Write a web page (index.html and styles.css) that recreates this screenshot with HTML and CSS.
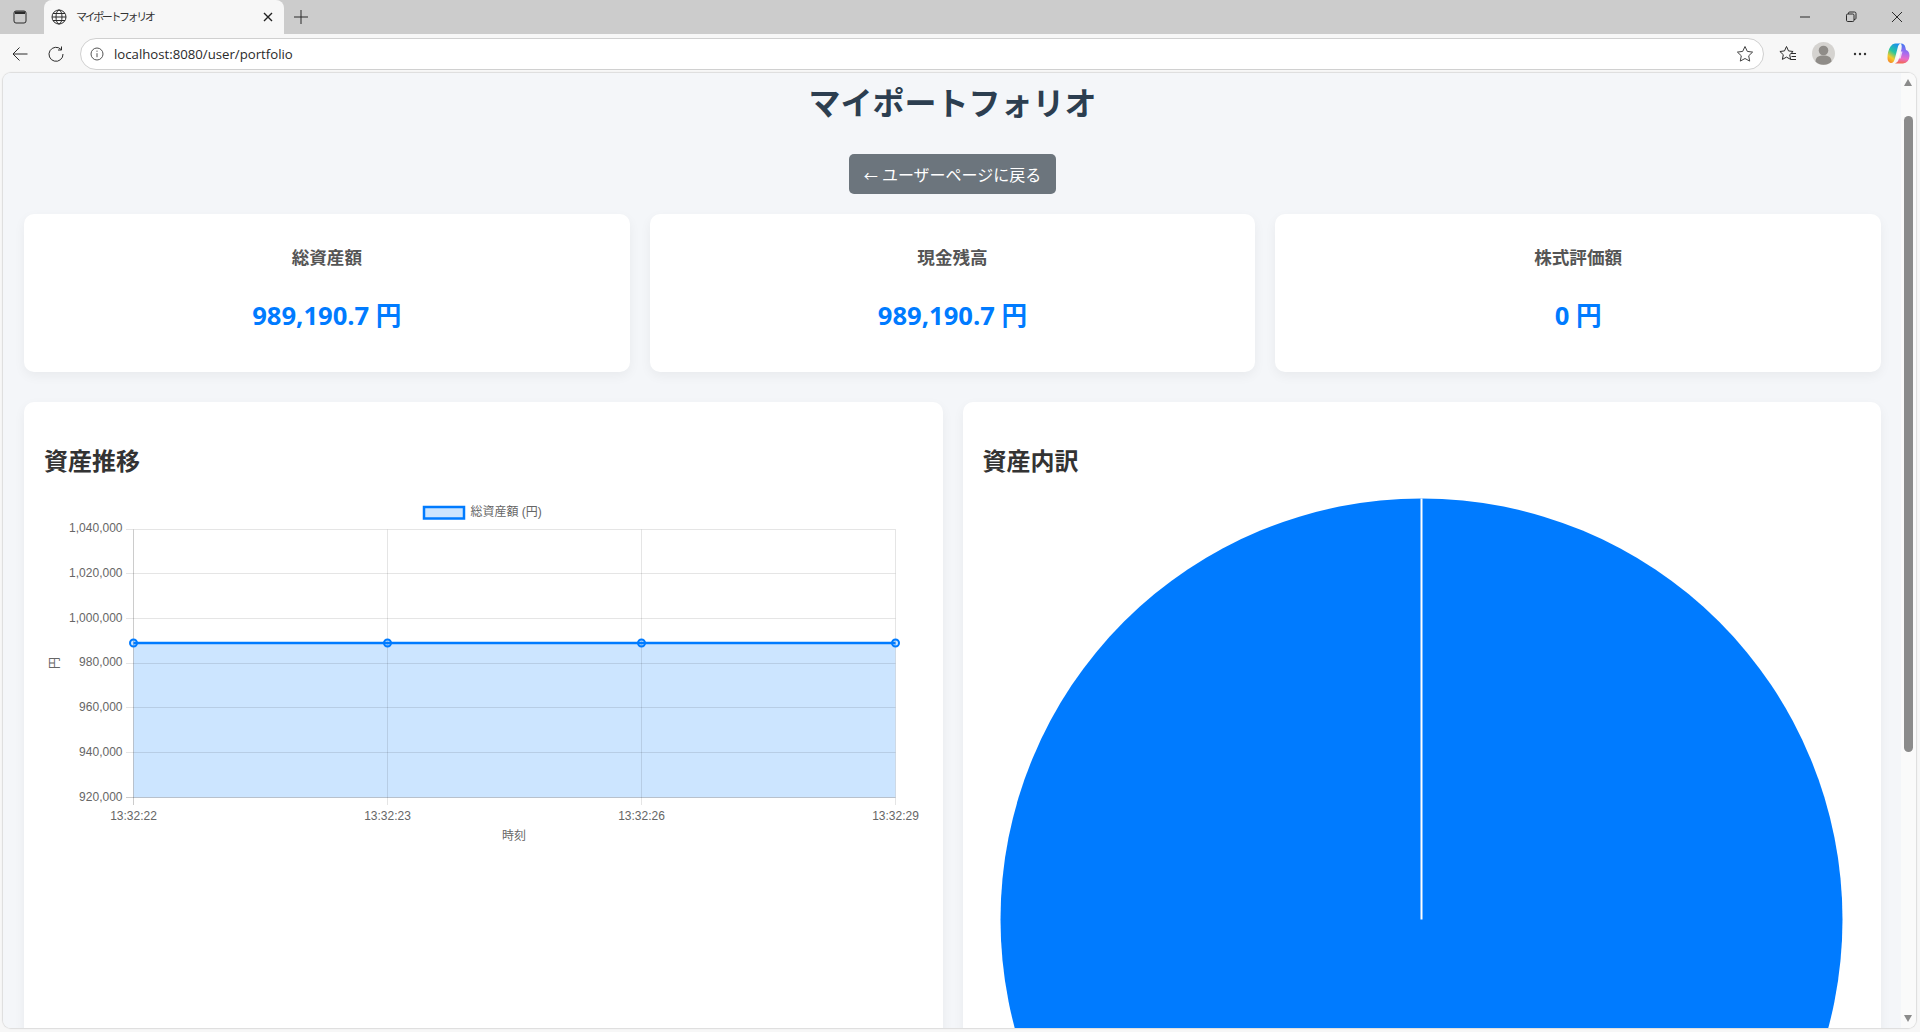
FILE: index.html
```html
<!DOCTYPE html>
<html lang="ja">
<head>
<meta charset="utf-8">
<title>マイポートフォリオ</title>
<link rel="stylesheet" href="styles.css">
</head>
<body>

<div class="tabstrip">
  <div class="strip-btn">
    <svg width="16" height="16" viewBox="0 0 16 16" class="ico"><rect x="2" y="2" width="12" height="12" rx="2"/><path class="solid" d="M3 2.500h10v2.500H3z"/></svg>
  </div>
  <div class="tab">
    <svg width="16" height="16" viewBox="0 0 16 16" class="ico"><circle cx="8" cy="8" r="7"/><ellipse cx="8" cy="8" rx="3" ry="7"/><path d="M1 8h14M2 4.500h12M2 11.500h12"/></svg>
    <span class="tab-title">マイポートフォリオ</span>
    <svg width="10" height="10" viewBox="0 0 10 10" class="ico tab-close"><path d="M1 1l8 8M9 1l-8 8"/></svg>
  </div>
  <div class="new-tab">
    <svg width="14" height="14" viewBox="0 0 14 14" class="ico"><path d="M7 0v14M0 7h14"/></svg>
  </div>
  <div class="spacer"></div>
  <div class="win-btn"><svg width="12" height="12" viewBox="0 0 12 12" class="ico"><path d="M1 6h10"/></svg></div>
  <div class="win-btn"><svg width="12" height="12" viewBox="0 0 12 12" class="ico"><rect x="1.500" y="3" width="7.500" height="7.500" rx="1.200"/><path d="M3.500 3V2.200Q3.500 1 4.700 1H9.500Q11 1 11 2.500V7.300Q11 8.500 9 8.500"/></svg></div>
  <div class="win-btn"><svg width="12" height="12" viewBox="0 0 12 12" class="ico"><path d="M1 1l10 10M11 1L1 11"/></svg></div>
</div>

<div class="toolbar">
  <div class="tool-btn"><svg width="16" height="16" viewBox="0 0 16 16" class="ico"><path d="M15.500 8H1M7.500 1.500L1 8l6.500 6.500"/></svg></div>
  <div class="tool-btn"><svg width="16" height="16" viewBox="0 0 16 16" class="ico"><path d="M13.200 3.600A7 7 0 1 0 15 8"/><path d="M13.500 0.500v3.500H10"/></svg></div>
  <div class="address">
    <svg width="14" height="14" viewBox="0 0 14 14" class="ico info"><circle cx="7" cy="7" r="6"/><path d="M7 6.200v4M7 3.600v1.200"/></svg>
    <span class="url">localhost:8080/user/portfolio</span>
    <svg width="18" height="18" viewBox="0 0 18 18" class="ico star"><path d="M9 1.500l2.300 4.900 5.300.7-3.900 3.700 1 5.300L9 13.500l-4.700 2.600 1-5.300-3.900-3.700 5.300-.7z"/></svg>
  </div>
  <div class="tool-btn fav"><svg width="18" height="18" viewBox="0 0 18 18" class="ico"><path d="M7.500 1.500l2 4.400 4.600.6-3.400 3.200.9 4.700-4.100-2.300-4.100 2.300.9-4.700L.9 6.500l4.600-.6z"/><path d="M12 8.500h5M12.500 11.500h4.500M11.500 14.500h5.500"/></svg></div>
  <div class="tool-btn avatar">
    <svg width="23" height="23" viewBox="0 0 23 23"><circle class="avatar-bg" cx="11.500" cy="11.500" r="11.500"/><circle class="avatar-fg" cx="11.500" cy="8.500" r="4.800"/><path class="avatar-fg" d="M3.500 19.500c0-4.500 3.500-6 8-6s8 1.500 8 6a11.500 11.500 0 0 1-16 0z"/></svg>
  </div>
  <div class="tool-btn"><svg width="14" height="4" viewBox="0 0 14 4"><circle class="dot" cx="2" cy="2" r="1.200"/><circle class="dot" cx="7" cy="2" r="1.200"/><circle class="dot" cx="12" cy="2" r="1.200"/></svg></div>
  <div class="tool-btn copilot">
    <svg width="23" height="23" viewBox="0 0 23 23">
      <defs>
        <linearGradient id="cpLeft" x1="0.700" y1="0" x2="0.200" y2="1"><stop offset="0" stop-color="#1a8cf0"/><stop offset="0.450" stop-color="#25c7a0"/><stop offset="0.750" stop-color="#f4cb2a"/><stop offset="1" stop-color="#f58a2a"/></linearGradient>
        <linearGradient id="cpRight" x1="0.500" y1="0" x2="0.400" y2="1"><stop offset="0" stop-color="#3f78f0"/><stop offset="0.450" stop-color="#a56cf0"/><stop offset="0.750" stop-color="#ea6cc8"/><stop offset="1" stop-color="#f2684a"/></linearGradient>
      </defs>
      <path fill="url(#cpRight)" d="M14 1.500Q17.500 1.500 18.300 5L19 8Q22.500 9 22.500 14 22 21 16 21.500H8Q10.500 21 11.500 18L14.500 7Q15 3 14 1.500z"/>
      <path fill="url(#cpLeft)" d="M8 1.500H14.500Q11.800 1.500 11 4.500L8 16Q7 21.500 3.500 21 .5 20 .5 16 .5 9 3.500 4.500 5.500 1.500 8 1.500z"/>
      <path class="cp-slit" d="M11.200 9.500h4.300l-1.900 7H9.300z"/>
    </svg>
  </div>
</div>

<div class="viewport">
  <main class="page">
    <h1 class="page-title">マイポートフォリオ</h1>
    <div class="back-row"><a class="back-btn"><span class="back-arrow">←</span> ユーザーページに戻る</a></div>

    <section class="summary">
      <div class="card stat">
        <h3>総資産額</h3>
        <p class="amount">989,190.7 円</p>
      </div>
      <div class="card stat">
        <h3>現金残高</h3>
        <p class="amount">989,190.7 円</p>
      </div>
      <div class="card stat">
        <h3>株式評価額</h3>
        <p class="amount">0 円</p>
      </div>
    </section>

    <section class="charts">
      <div class="card chart-card">
        <h2>資産推移</h2>
        <svg class="line-chart" width="879" height="360" viewBox="0 0 879 360">
          <rect class="area" x="90.500" y="148" width="762" height="154.500"/>
          <path class="grid" d="M83 34.500H852.500M83 78.500H852.500M83 123.500H852.500M83 168.500H852.500M83 212.500H852.500M83 257.500H852.500"/>
          <path class="grid" d="M344.500 34.500V310M598.500 34.500V310M852.500 34.500V310"/>
          <path class="axis" d="M90.500 34.500V310M83 302.500H852.500"/>
          <path class="data-line" d="M90.500 148H852.500"/>
          <circle class="pt" cx="90.500" cy="148" r="3.500"/>
          <circle class="pt" cx="344.500" cy="148" r="3.500"/>
          <circle class="pt" cx="598.500" cy="148" r="3.500"/>
          <circle class="pt" cx="852.500" cy="148" r="3.500"/>

          <rect class="legend-box" x="381" y="12" width="40" height="11.500"/>
          <text class="lbl" x="427.500" y="21">総資産額 (円)</text>

          <text class="lbl end" x="79.500" y="37">1,040,000</text>
          <text class="lbl end" x="79.500" y="82">1,020,000</text>
          <text class="lbl end" x="79.500" y="127">1,000,000</text>
          <text class="lbl end" x="79.500" y="171">980,000</text>
          <text class="lbl end" x="79.500" y="216">960,000</text>
          <text class="lbl end" x="79.500" y="261">940,000</text>
          <text class="lbl end" x="79.500" y="306">920,000</text>

          <text class="lbl mid" x="90.500" y="324.500">13:32:22</text>
          <text class="lbl mid" x="344.500" y="324.500">13:32:23</text>
          <text class="lbl mid" x="598.500" y="324.500">13:32:26</text>
          <text class="lbl mid" x="852.500" y="324.500">13:32:29</text>

          <text class="lbl mid" x="471" y="345">時刻</text>
          <text class="lbl mid" transform="translate(16 168) rotate(-90)">円</text>
        </svg>
      </div>

      <div class="card chart-card">
        <h2>資産内訳</h2>
        <svg class="pie-chart" width="879" height="860" viewBox="0 0 879 860">
          <circle class="pie" cx="439.500" cy="424.500" r="421"/>
          <path class="pie-seam" d="M439.500 3.500V424.500"/>
        </svg>
      </div>
    </section>
  </main>

  <div class="scrollbar">
    <span class="arrow up"></span>
    <span class="thumb"></span>
    <span class="arrow down"></span>
  </div>
</div>

</body>
</html>
```

FILE: styles.css
```css
html, body {
  margin: 0;
  height: 100%;
  overflow: hidden;
}

body {
  display: flex;
  flex-direction: column;
  background: #f7f7f7;
  font-family: "Open Sans", "Noto Sans CJK JP", sans-serif;
}

.ico {
  fill: none;
  stroke: #2b2b2b;
  stroke-width: 1;
}

.ico .solid {
  fill: #2b2b2b;
  stroke: none;
}

/* browser frame */
.tabstrip {
  display: flex;
  align-items: center;
  height: 34px;
  flex: none;
  background: #cccccc;
}

.strip-btn {
  width: 39px;
  display: flex;
  justify-content: center;
}

.tab {
  display: flex;
  align-items: center;
  width: 240px;
  height: 34px;
  margin-left: 5px;
  padding: 0 11px 0 7px;
  box-sizing: border-box;
  background: #f7f7f7;
  border-radius: 8px 8px 0 0;
}

.tab-title {
  flex: 1;
  margin-left: 9px;
  margin-bottom: 2px;
  font: 11px "Noto Sans CJK JP", sans-serif;
  letter-spacing: -2.400px;
  color: #333;
  white-space: nowrap;
}

.tab-close {
  stroke-width: 1.400;
  stroke: #222;
}

.new-tab {
  width: 34px;
  display: flex;
  justify-content: center;
}

.spacer {
  flex: 1;
}

.win-btn {
  width: 46px;
  display: flex;
  justify-content: center;
}

.toolbar {
  display: flex;
  align-items: center;
  height: 39px;
  flex: none;
  padding-left: 2px;
  box-sizing: border-box;
  background: #f7f7f7;
}

.tool-btn {
  width: 36px;
  display: flex;
  justify-content: center;
  align-items: center;
}

.address {
  display: flex;
  align-items: center;
  width: 1684px;
  height: 32px;
  margin-left: 6px;
  padding: 0 9px;
  box-sizing: border-box;
  background: #fff;
  border: 1px solid #d0d0d0;
  border-radius: 16px;
}

.info {
  stroke: #555;
}

.url {
  flex: 1;
  margin-left: 10px;
  font: 13.200px "Open Sans", sans-serif;
  color: #2a2a2a;
}

.star {
  stroke: #444;
}

.fav {
  margin-left: 6px;
}

.avatar {
  margin-left: -1px;
  margin-right: 1px;
}

.avatar-bg {
  fill: #d5d3d0;
}

.avatar-fg {
  fill: #8f8c88;
}

.dot {
  fill: #333;
}

.copilot {
  margin-left: 2px;
}

.cp-slit {
  fill: #fff;
  opacity: 0.75;
}

/* page area */
.viewport {
  display: flex;
  height: 955px;
  flex: none;
  margin: 0 4px 4px 3px;
  border-radius: 8px;
  overflow: hidden;
  box-shadow: 0 0 1px 1px #dcdcdc;
}

.page {
  flex: 1;
  min-width: 0;
  overflow: hidden;
  padding: 10px 20px 0 21px;
  background: #f4f6f9;
}

.page-title {
  margin: 0;
  font-size: 32px;
  line-height: 40px;
  font-weight: 700;
  text-align: center;
  color: #2c3e50;
}

.back-row {
  display: flex;
  justify-content: center;
  margin-top: 31px;
}

.back-btn {
  display: block;
  height: 40px;
  padding: 10px 15px 0;
  box-sizing: border-box;
  font-size: 16px;
  line-height: 22px;
  color: #fff;
  background: #6c757d;
  border-radius: 5px;
}

.back-arrow {
  font-size: 14px;
}

.card {
  background: #fff;
  border-radius: 10px;
  box-shadow: 0 4px 12px rgba(0, 0, 0, 0.05);
}

.summary {
  display: grid;
  grid-template-columns: repeat(3, 1fr);
  gap: 20px;
  margin-top: 20px;
}

.stat {
  height: 158px;
  padding-top: 30px;
  box-sizing: border-box;
  text-align: center;
}

.stat h3 {
  margin: 0;
  font-size: 17.600px;
  line-height: 26px;
  font-weight: 700;
  color: #555;
}

.amount {
  margin: 29px 0 0;
  font-size: 25.600px;
  line-height: 34px;
  font-weight: 700;
  color: #007bff;
}

.charts {
  display: grid;
  grid-template-columns: 1fr 1fr;
  gap: 20px;
  margin-top: 30px;
}

.chart-card {
  padding: 41px 20px 20px;
}

.chart-card h2 {
  margin: 0 0 16px;
  font-size: 24px;
  line-height: 36px;
  font-weight: 700;
  color: #333;
}

.line-chart,
.pie-chart {
  display: block;
  margin-left: -1px;
}

.area {
  fill: rgba(0, 123, 255, 0.2);
}

.grid {
  fill: none;
  stroke: rgba(0, 0, 0, 0.1);
  stroke-width: 1;
}

.axis {
  fill: none;
  stroke: rgba(0, 0, 0, 0.2);
  stroke-width: 1;
}

.data-line {
  fill: none;
  stroke: #007bff;
  stroke-width: 2.500;
}

.pt {
  fill: rgba(0, 123, 255, 0.2);
  stroke: #007bff;
  stroke-width: 2;
}

.legend-box {
  fill: rgba(0, 123, 255, 0.2);
  stroke: #007bff;
  stroke-width: 2.500;
}

.lbl {
  font: 12px "Liberation Sans", "Noto Sans CJK JP", sans-serif;
  fill: #666;
}

.end {
  text-anchor: end;
}

.mid {
  text-anchor: middle;
}

.pie {
  fill: #007bff;
}

.pie-seam {
  fill: none;
  stroke: #fff;
  stroke-width: 2;
}

/* fake scrollbar */
.scrollbar {
  position: relative;
  width: 15px;
  flex: none;
  background: #fafafa;
}

.thumb {
  position: absolute;
  top: 43px;
  left: 3px;
  width: 9px;
  height: 636px;
  border-radius: 5px;
  background: #8b8b8b;
}

.arrow {
  position: absolute;
  left: 3px;
  width: 0;
  height: 0;
  border-left: 4.500px solid transparent;
  border-right: 4.500px solid transparent;
}

.up {
  top: 6px;
  border-bottom: 7px solid #8b8b8b;
}

.down {
  bottom: 6px;
  border-top: 7px solid #8b8b8b;
}
```
